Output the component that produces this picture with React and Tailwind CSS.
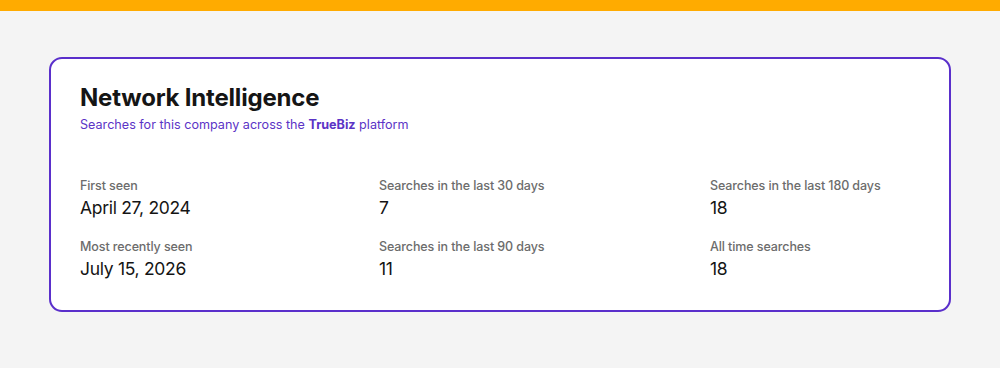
const stats = [
  [
    { label: "First seen", value: "April 27, 2024" },
    { label: "Most recently seen", value: "July 15, 2026" },
  ],
  [
    { label: "Searches in the last 30 days", value: "7" },
    { label: "Searches in the last 90 days", value: "11" },
  ],
  [
    { label: "Searches in the last 180 days", value: "18" },
    { label: "All time searches", value: "18" },
  ],
];

function Stat({ label, value }) {
  return (
    <div className="flex flex-col">
      <span className="text-[12.5px] leading-5 font-medium text-[#6c6c6c] tracking-[-0.1px]">{label}</span>
      <span className="text-[17.5px] leading-7 text-[#141414] tracking-[-0.3px] -mt-[2px]">{value}</span>
    </div>
  );
}

export default function App() {
  return (
    <div className="min-h-[368px] w-full bg-[#f4f4f4] font-['Inter',sans-serif]">
      <div className="h-[11px] bg-[#ffab00]" />
      <div className="px-[49px] pt-[46px]">
        <div className="rounded-[13px] border-2 border-[#5a2fcb] bg-white pl-[29px] pr-[30px] pt-[23px] pb-[27px]">
          <h1 className="text-[24px] leading-8 font-bold text-[#151515] tracking-[-0.2px]">Network Intelligence</h1>
          <p className="mt-[1px] text-[12.6px] leading-5 text-[#5b34c6]">
            Searches for this company across the <span className="font-bold">TrueBiz</span> platform
          </p>
          <div className="mt-[41px] grid grid-cols-[299px_331px_1fr]">
            {stats.map((col, i) => (
              <div key={i} className="flex flex-col gap-[15px]">
                {col.map((s) => (
                  <Stat key={s.label} {...s} />
                ))}
              </div>
            ))}
          </div>
        </div>
      </div>
    </div>
  );
}
